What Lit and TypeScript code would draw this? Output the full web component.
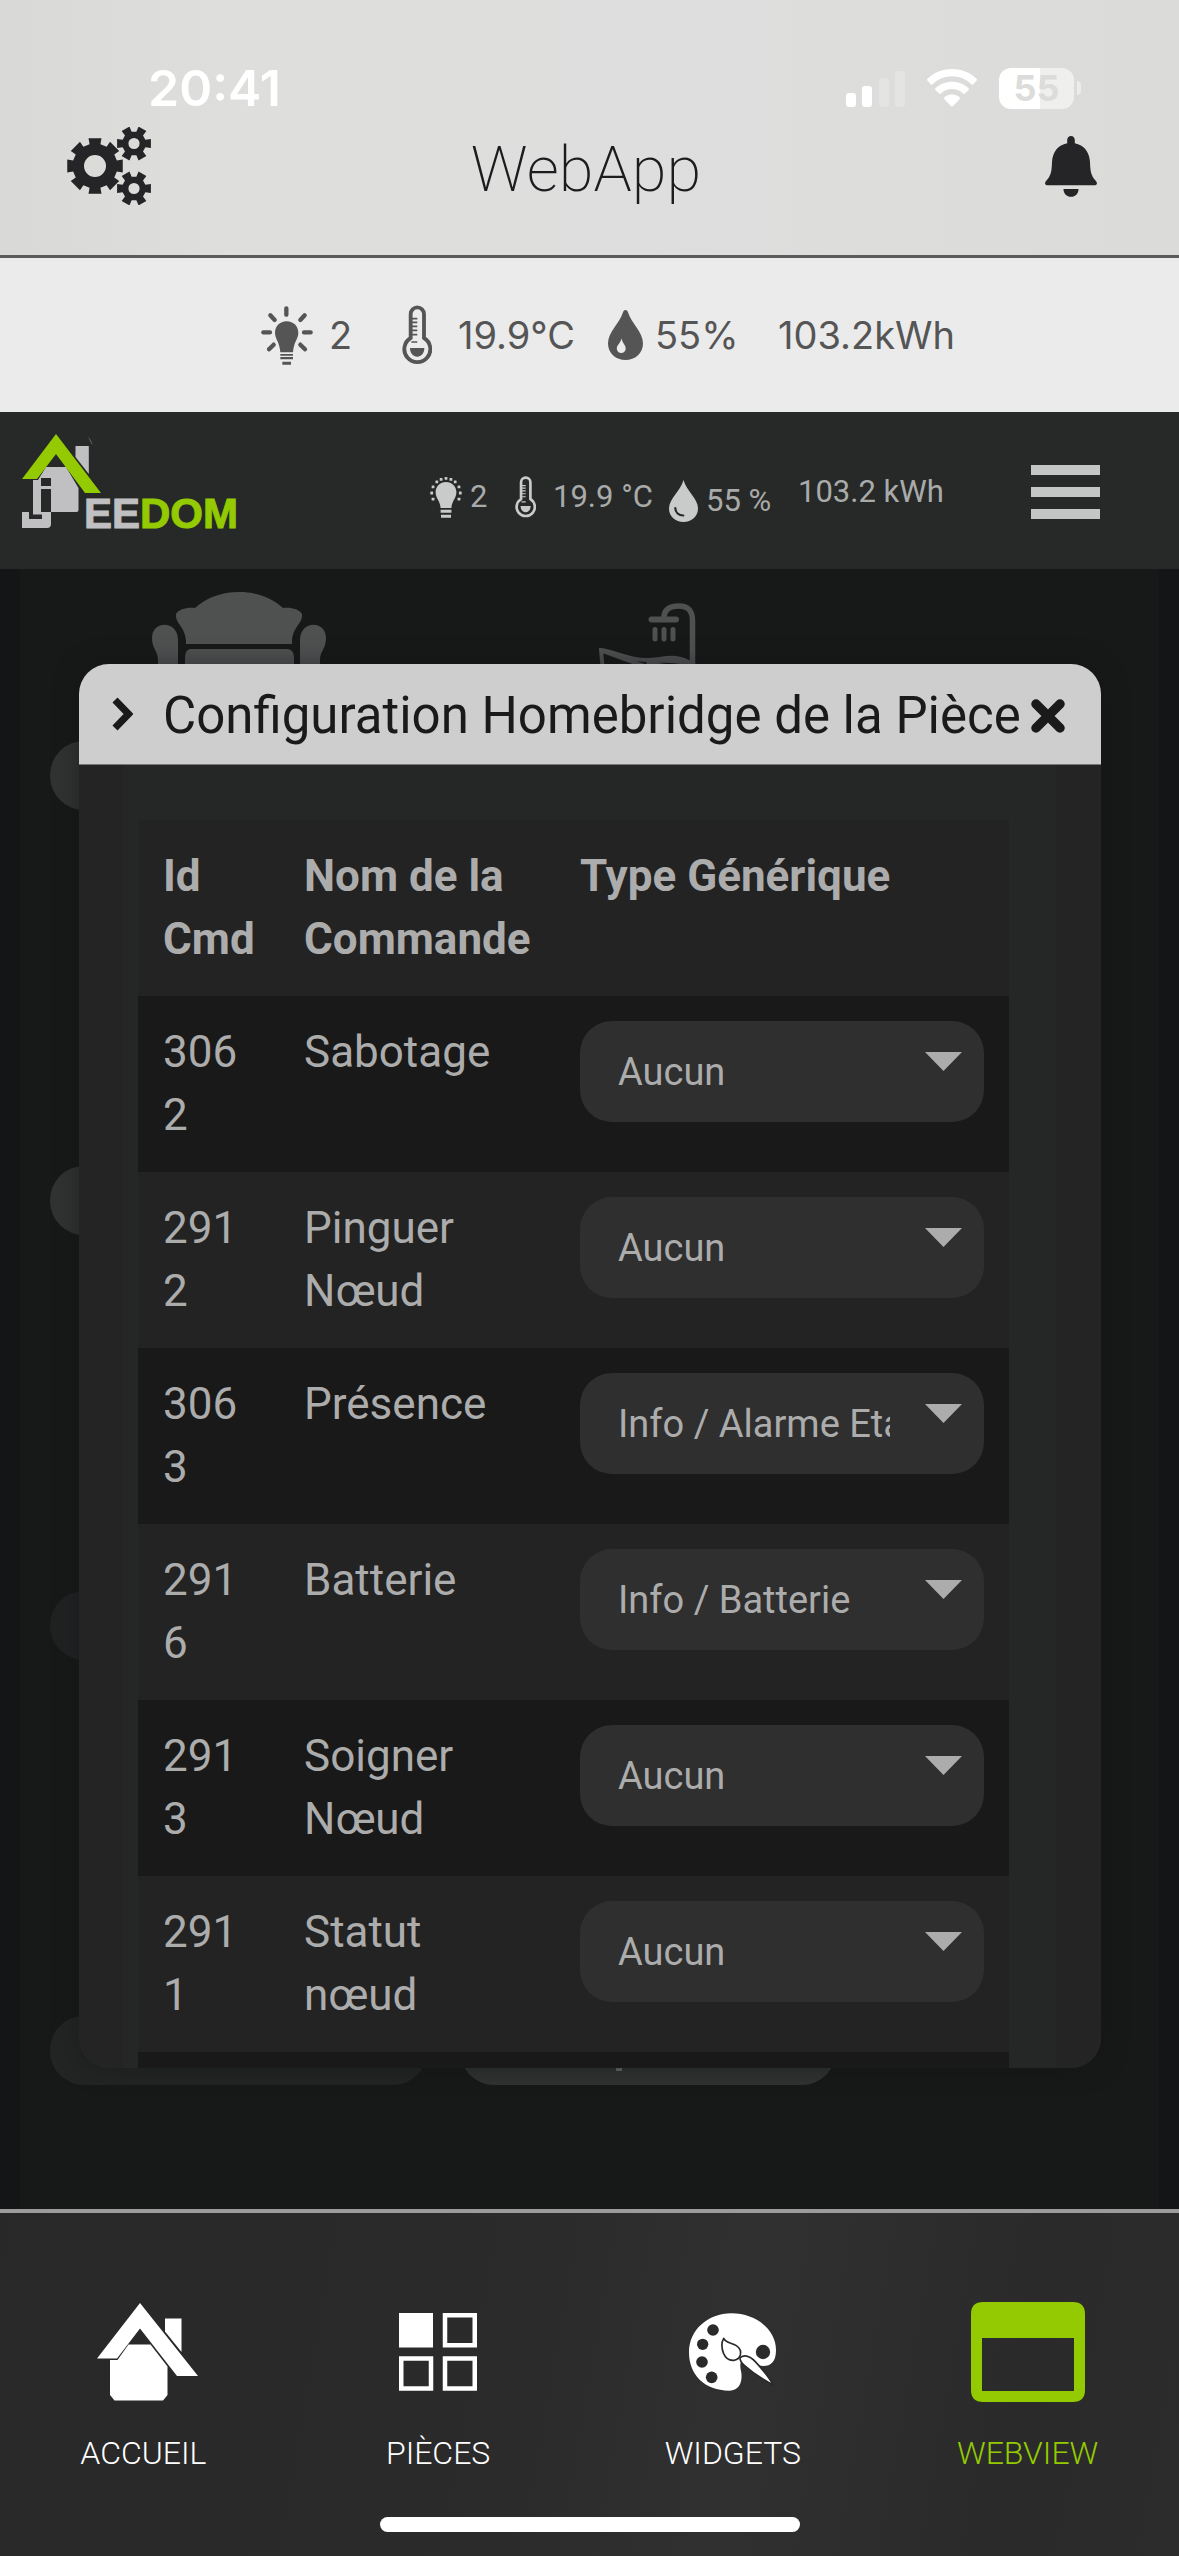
import { LitElement, html, css, svg } from "lit";
import { customElement, property } from "lit/decorators.js";

const round = (n: number) => Math.round(n * 100) / 100;

/** Outline of a gear with a round hole, teeth starting at angle 0. */
function gearPath(cx: number, cy: number, teeth: number, outer: number, root: number, hole: number, tip: number): string {
  const pitch = (Math.PI * 2) / teeth;
  const points: string[] = [];
  for (let i = 0; i < teeth; i++) {
    const a = i * pitch;
    const corners: [number, number][] = [
      [root, a - pitch * 0.31],
      [outer, a - tip],
      [outer, a + tip],
      [root, a + pitch * 0.31],
    ];
    for (const [r, t] of corners) points.push(`${round(cx + r * Math.cos(t))} ${round(cy + r * Math.sin(t))}`);
  }
  return `M${points.join("L")}Z M${cx - hole} ${cy}a${hole} ${hole} 0 1 0 ${hole * 2} 0a${hole} ${hole} 0 1 0 ${-hole * 2} 0z`;
}

const gearsIcon = html`<svg width="86" height="78" viewBox="0 0 86 78" fill="currentColor" fill-rule="evenodd" aria-hidden="true">
  <path d=${gearPath(28, 39, 8, 28.5, 22.5, 11, 0.23)} />
  <path d=${gearPath(67, 16.5, 6, 17.5, 12, 5.6, 0.26)} />
  <path d=${gearPath(67, 61.5, 6, 17.5, 12, 5.6, 0.26)} />
</svg>`;

const bellIcon = html`<svg width="52" height="61" viewBox="0 0 52 61" fill="currentColor" aria-hidden="true">
  <path d="M26 0c2.400 0 3.800 1.800 3.800 4v3.200C39 9 44.500 16 45 26c.3 10 1.200 13.500 5.500 18.500 2.500 3 1.500 4.700-1.500 4.700H3c-3 0-4-1.700-1.500-4.700C5.800 39.500 6.700 36 7 26 7.500 16 13 9 22.200 7.200V4c0-2.200 1.400-4 3.800-4z" />
  <path d="M18.500 53h15c0 4.800-3.200 7.800-7.500 7.800s-7.500-3-7.500-7.800z" />
</svg>`;

const signalIcon = html`<svg width="59" height="37" viewBox="0 0 59 37" fill="#fff" aria-hidden="true">
  <rect x="0" y="23" width="10" height="14" rx="3" /><rect x="16" y="16" width="10" height="21" rx="3" />
  <rect x="33" y="8" width="10" height="29" rx="3" opacity=".22" /><rect x="49" y="1" width="10" height="36" rx="3" opacity=".22" />
</svg>`;

const wifiIcon = html`<svg width="50" height="38" viewBox="0 0 50 38" fill="#fff" aria-hidden="true">
  <path d="M25 0C35 0 43.500 3.800 49.500 9.800c.6.600.6 1.400 0 2l-3.200 3.400c-.6.600-1.400.6-2 0C39.200 10.300 32.500 7.300 25 7.300S10.800 10.300 5.700 15.200c-.6.600-1.400.6-2 0L.5 11.800c-.6-.6-.6-1.400 0-2C6.500 3.800 15 0 25 0z" />
  <path d="M25 12.700c6.500 0 12.200 2.400 16.400 6.300.6.600.6 1.300 0 1.900l-3.400 3.500c-.6.600-1.300.6-1.900 0-2.900-2.700-6.700-4.300-11.100-4.300s-8.200 1.600-11.100 4.300c-.6.600-1.300.6-1.900 0l-3.400-3.500c-.6-.6-.6-1.300 0-1.900C12.800 15.100 18.500 12.700 25 12.700z" />
  <path d="M25 25.600c3 0 5.600 1 7.500 2.700.6.600.6 1.300 0 1.900l-6.500 6.900c-.6.600-1.400.6-2 0l-6.500-6.900c-.6-.6-.6-1.300 0-1.900 1.900-1.700 4.500-2.700 7.500-2.700z" />
</svg>`;

const shiningBulb = html`<svg width="52" height="59" viewBox="0 0 156 177" fill="currentColor" aria-hidden="true">
  <path d="M77 46c21 0 35 15 35 35 0 18-14 26-16 58H58c-2-32-16-40-16-58 0-20 14-35 35-35z" />
  <path d="M58 144h38v5H58zM58 153h38v7H58zM64 167h26v9H64z" />
  <path d="M76 7v19M7 79h20M129 79h20M28 28l13 14M131 28l-13 14M38 116l-14 14M118 116l14 14" fill="none" stroke="currentColor" stroke-width="13" stroke-linecap="round" />
</svg>`;

const dottedBulb = html`<svg width="32" height="42" viewBox="0 0 32 42" fill="currentColor" aria-hidden="true">
  <path d="M16 6c6 0 10.400 4.500 10.400 10.300 0 6-4.400 8.200-5 15.700H10.600c-.6-7.500-5-9.700-5-15.700C5.600 10.500 10 6 16 6zM10.600 33.800h10.800v3H10.600zM11 38.800h10v3H11z" />
  ${[-205, -180, -155, -130, -110, -90, -70, -50, -25, 0, 25].map((deg) => {
    const a = (deg * Math.PI) / 180;
    return svg`<rect x=${round(14.600 + 14.300 * Math.cos(a))} y=${round(15.600 + 14.600 * Math.sin(a))} width="2.800" height="2.800" rx=".5" />`;
  })}
</svg>`;

const thermometer = (width: number, height: number) => html`<svg width=${width} height=${height} viewBox="0 0 90 178" fill="currentColor" aria-hidden="true">
  <path d="M26 98V26a20 20 0 0 1 40 0v72a39 39 0 1 1-40 0z" fill="none" stroke="currentColor" stroke-width="11.500" />
  <path d="M28 40h18M28 51h18M28 63h18M28 75h18M28 88h18M28 110h18" stroke="currentColor" stroke-width="5" />
  <path d="M24 128h43c0 16-9 26-21.500 26S24 144 24 128z" />
</svg>`;

const dropHole = html`<svg width="35" height="50" viewBox="0 0 35 50" fill="currentColor" fill-rule="evenodd" aria-hidden="true">
  <path d="M17.500 0c1.200 0 2 .7 2.400 2C23.500 13.500 35 22 35 33.500 35 43.500 27 50 17.500 50S0 43.500 0 33.500C0 22 11.500 13.500 15.100 2c.4-1.300 1.200-2 2.400-2zM13.500 28.500c-.9 4.500-4.700 6.500-4.700 10a4.200 4.200 0 0 0 8.900 0c0-3.500-3.300-5.500-4.200-10z" />
</svg>`;

const dropArc = html`<svg width="29" height="42" viewBox="0 0 29 42" aria-hidden="true">
  <path d="M14.500 0C17.500 11 29 18.500 29 28.500 29 36.500 22.500 42 14.500 42S0 36.500 0 28.500C0 18.500 11.500 11 14.500 0z" fill="currentColor" />
  <path d="M6.300 28c0 4.500 3.500 7.500 8 7.500" fill="none" stroke="#272928" stroke-width="2.200" stroke-linecap="round" />
</svg>`;

const logoHouse = html`<svg width="80" height="96" viewBox="0 0 80 96" aria-hidden="true">
  <path d="M53.500 12h13.300v28L53.500 23z" fill="#c0c0c3" />
  <path d="M66 3c2.500 2 4 4.500 4.500 8-1.500-1.500-2-3-3-5z" fill="#5a5c5d" />
  <path d="M24 33h20l12.500 21v22q0 2-2 2H29v2.500H11V46h5z" fill="#c0c0c3" />
  <path d="M0 78h7v7h13v-7h9v12q0 4-4 4H0z" fill="#c0c0c3" />
  <path d="M19 44h10v8H19zM19 55h10v23H19z" fill="#272928" />
  <path d="M34 0l45 59H63L34 20 15 45H0z" fill="#94ca02" />
</svg>`;

const armchair = html`<svg width="174" height="120" viewBox="0 0 174 120" fill="currentColor" aria-hidden="true">
  <path d="M87 0c18 0 33 6 44 16 8-1 16 1 19 6 1 10-9 12-10 27v3H34v-3c-1-15-11-17-10-27 3-5 11-7 19-6C54 6 69 0 87 0z" />
  <path d="M38 57h98q6 1 6 9v14H33V66q0-8 5-9z" />
  <path d="M0 46c0-18 26-18 26 2v72H6V68c0-9-6-11-6-22zM174 46c0-18-26-18-26 2v72h20V68c0-9 6-11 6-22z" />
</svg>`;

const bathtub = html`<svg width="98" height="109" viewBox="0 0 98 109" fill="none" stroke="currentColor" aria-hidden="true">
  <path d="M65 15C65 6 71 3 80 3c9 0 13.500 5 13.500 14v62" stroke-width="5.500" />
  <path d="M52.500 16.500H77" stroke-width="6" stroke-linecap="round" />
  <path d="M56 26.500v9.500M65 26.500v9.500M74 26.500v9.500" stroke-width="5" stroke-linecap="round" />
  <path d="M5 79L2 47c14 2 28 10 45 10 16 0 30-7 46 4M4 48l52 19M48 59c16-2 30-2 44 3-12 3-30 2-44-3z" stroke-width="4" />
</svg>`;

/* The box starts left of the roof: the chimney side sits off centre. */
const houseTab = html`<svg width="109" height="98" viewBox="-8 0 109 98" fill="currentColor" aria-hidden="true">
  <path d="M43 0l58 73H80L43 25.500 20 55.500H0z" />
  <path d="M68 15.500h16.500v33.500L68 28.500z" />
  <path d="M31.500 41.500h22L70.500 63.500V92l-4.500 5.500H17.500L13 92V57h7.500z" />
</svg>`;

const roomsTab = html`<svg width="78" height="78" viewBox="0 0 78 78" fill="none" stroke="currentColor" stroke-width="4.500" aria-hidden="true">
  <rect x="0" y="0" width="34" height="34.500" fill="currentColor" stroke="none" />
  <rect x="46" y="2.250" width="29.750" height="30" /><rect x="2.250" y="45.500" width="29.750" height="30" /><rect x="46" y="45.500" width="29.750" height="30" />
</svg>`;

const paletteTab = html`<svg width="87" height="79" viewBox="33 35 261 235" aria-hidden="true">
  <path d="M160 35c75 0 134 50 134 110 0 35-15 48-38 48-22 0-38-24-60-18-12 4-10 20-6 38 3 22-2 54-36 54C80 267 33 220 33 152 33 85 90 35 160 35z" fill="currentColor" />
  <g fill="#2a2a2a"><circle cx="105" cy="85" r="17.500" /><circle cx="74" cy="128" r="17" /><circle cx="72" cy="181" r="17.500" /><circle cx="101" cy="227" r="17.500" /><circle cx="255" cy="151" r="21.500" /></g>
  <g fill="currentColor" stroke="#2a2a2a" stroke-width="5" stroke-linejoin="round">
    <path d="M186 168c14-10 32-3 48 14 20 22 40 46 52 68-30-16-66-40-88-60-8-7-12-14-12-22z" />
    <path d="M137 110c8 16 24 12 38 22 10 7 15 18 12 28-3 9-10 15-20 16-12 1-24-6-30-20-6-15-8-32 0-46z" />
  </g>
</svg>`;

const webviewTab = html`<svg width="114" height="100" viewBox="0 0 114 100" fill="currentColor" fill-rule="evenodd" aria-hidden="true">
  <path d="M12 0h90q12 0 12 12v76q0 12-12 12H12Q0 100 0 88V12Q0 0 12 0zM11 36v53h92V36z" />
</svg>`;

@customElement("app-header")
class AppHeader extends LitElement {
  static styles = css`
    :host { display: block; background: linear-gradient(90deg, #d9d9d7, #dededc 20%, #dedede 55%, #dbdbd9); border-bottom: 3px solid #5c5a5a; padding: 60px 0 39px; }
    .status { display: flex; align-items: center; height: 56px; padding: 0 98px 0 148px; font-family: Inter, "Liberation Sans", sans-serif; }
    .time { color: #fff; font-size: 50px; font-weight: 600; line-height: 56px; }
    .signals { display: flex; align-items: center; gap: 22px; margin-left: auto; }
    .battery { display: flex; align-items: center; gap: 3px; }
    .level { width: 75px; height: 41px; border-radius: 12px; background: linear-gradient(90deg, #fff 55%, #efefee 55%); color: #dcdcda; font-size: 36px; font-weight: 700; line-height: 41px; text-align: center; }
    .nub { width: 4px; height: 14px; border-radius: 0 4px 4px 0; background: #ececeb; }
    .bar { display: grid; grid-template-columns: 1fr auto 1fr; align-items: center; height: 100px; padding: 0 82px 0 67px; color: #252527; }
    h1 { margin: 0; padding: 8px 0 0 8px; font: 200 63px/92px Roboto, "Liberation Sans", sans-serif; color: #1c1c1e; }
    button { display: flex; padding: 0; border: 0; background: none; color: inherit; }
    .right { justify-self: end; }
  `;
  render() {
    return html`<div class="status">
        <span class="time">20:41</span>
        <div class="signals">${signalIcon}${wifiIcon}<div class="battery"><div class="level">55</div><div class="nub"></div></div></div>
      </div>
      <header class="bar">
        <button aria-label="Réglages">${gearsIcon}</button>
        <h1>WebApp</h1>
        <button class="right" aria-label="Notifications">${bellIcon}</button>
      </header>`;
  }
}

@customElement("summary-bar")
class SummaryBar extends LitElement {
  static styles = css`
    :host { display: grid; grid-template-columns: 141px 206px 170px auto; align-items: center; height: 154px; padding-left: 261px; background: #ebebeb; color: #555; font: 400 38px/44px Inter, "Liberation Sans", sans-serif; }
    .item { display: flex; align-items: center; gap: 16px; }
    .wide { gap: 26px; }
    .tight { gap: 12px; }
  `;
  render() {
    return html`<span class="item">${shiningBulb}2</span>
      <span class="item wide">${thermometer(30, 60)}19.9°C</span>
      <span class="item tight">${dropHole}55%</span>
      <span class="item">103.2kWh</span>`;
  }
}

@customElement("jeedom-header")
class JeedomHeader extends LitElement {
  static styles = css`
    :host { display: flex; align-items: flex-start; height: 157px; padding: 22px 79px 0 22px; box-sizing: border-box; background: #272928; color: #c4c6c5; }
    .logo { display: flex; align-items: flex-end; width: 408px; height: 96px; text-decoration: none; }
    .name { margin-left: -18px; font: 700 42px/32px "Liberation Sans", Arial, sans-serif; color: #c0c0c3; -webkit-text-stroke: 1px currentColor; }
    .green { color: #94ca02; }
    .stats { display: grid; grid-template-columns: 85px 154px 129px auto; align-items: start; padding-top: 38px; font: 400 31px/40px Roboto, "Liberation Sans", sans-serif; color: #a9abaa; }
    .item { display: flex; align-items: center; gap: 8px; }
    .item svg { color: #c9cbca; }
    .wide { gap: 17px; }
    .mid { padding-top: 4px; }
    .low { padding-top: 8px; }
    .menu { display: flex; flex-direction: column; gap: 12px; width: 69px; margin: 31px 0 0 auto; padding: 0; border: 0; background: none; }
    .line { height: 10px; background: #c4c6c5; }
  `;
  render() {
    return html`<a class="logo" href="#">${logoHouse}<span class="name">EE<span class="green">DOM</span></span></a>
      <div class="stats">
        <span class="item mid">${dottedBulb}2</span>
        <span class="item mid wide">${thermometer(21, 42)}19.9 °C</span>
        <span class="item low">${dropArc}55 %</span>
        <span class="item">103.2 kWh</span>
      </div>
      <button class="menu" aria-label="Menu"><span class="line"></span><span class="line"></span><span class="line"></span></button>`;
  }
}

interface Tile { icon?: unknown; tone: string; }

const TILES: Tile[] = [
  { icon: armchair, tone: "light" }, { icon: bathtub, tone: "light" },
  { tone: "light" }, { tone: "light" },
  { tone: "dim" }, { tone: "dim" },
  { tone: "soft" }, { tone: "light tail" },
];

@customElement("room-grid")
class RoomGrid extends LitElement {
  static styles = css`
    :host { display: grid; grid-template-columns: 377px 376px; grid-template-rows: 241px; grid-auto-rows: 425px; column-gap: 33px; padding-left: 50px; color: #4f5151; }
    .tile { display: flex; flex-direction: column; align-items: center; justify-content: flex-end; }
    .tile svg { margin-bottom: -11px; }
    .tile svg + .pill { margin-top: 40px; }
    .pill { position: relative; width: 100%; height: 69px; border-radius: 34px; background: #313332; }
    .dim .pill { background: #202222; }
    .soft .pill { background: #232524; }
    .tail .pill::after { content: ""; position: absolute; left: 156px; bottom: 14px; width: 6px; height: 10px; background: #686a69; }
  `;
  render() {
    return TILES.map((t) => html`<div class="tile ${t.tone}">${t.icon ?? ""}<div class="pill"></div></div>`);
  }
}

interface Command { id: string; name: string; type: string; }

const COMMANDS: Command[] = [
  { id: "3062", name: "Sabotage", type: "Aucun" },
  { id: "2912", name: "Pinguer Nœud", type: "Aucun" },
  { id: "3063", name: "Présence", type: "Info / Alarme Etat" },
  { id: "2916", name: "Batterie", type: "Info / Batterie" },
  { id: "2913", name: "Soigner Nœud", type: "Aucun" },
  { id: "2911", name: "Statut nœud", type: "Aucun" },
];

@customElement("config-dialog")
class ConfigDialog extends LitElement {
  @property({ attribute: false }) commands: Command[] = [];

  static styles = css`
    :host { display: flex; flex-direction: column; min-height: 0; border-radius: 30px; overflow: hidden; background: #242424; box-shadow: 0 0 24px rgba(18, 19, 24, 0.5); font-family: Roboto, "Liberation Sans", sans-serif; }
    .title { display: flex; align-items: center; flex: none; height: 100px; padding: 0 35px 0 33px; background: #cecece; border-bottom: 1px solid #777; color: #1a1a1a; }
    h2 { margin: 0 auto 0 30px; padding-top: 4px; font-size: 51px; font-weight: 400; line-height: 60px; white-space: nowrap; }
    .close { display: flex; padding: 4px 0 0; border: 0; background: none; color: inherit; }
    .body { flex: 1; min-height: 0; overflow: hidden; padding: 55px 92px 0 59px; background: linear-gradient(90deg, #242424 44px, #252726 44px, #252726 calc(100% - 45px), #242424 calc(100% - 45px)); }
    table { width: 100%; table-layout: fixed; border-collapse: collapse; color: #acacac; font-size: 44px; line-height: 63px; }
    .c-id { width: 141px; }
    .c-name { width: 276px; }
    tr { background: #232323; }
    tbody tr:nth-child(odd) { background: #191919; }
    th, td { box-sizing: border-box; height: 176px; padding: 25px; text-align: left; vertical-align: top; overflow-wrap: anywhere; }
    th { padding-right: 8px; font-weight: 700; }
    .pick { display: block; position: relative; }
    select { display: block; width: 100%; height: 101px; padding: 0 94px 0 38px; border: 0; border-radius: 32px; appearance: none; background: #2f2f2f; color: #acacac; font: 400 38px/44px Roboto, "Liberation Sans", sans-serif; }
    .arrow { position: absolute; right: 22px; top: 31px; pointer-events: none; }
  `;
  render() {
    return html`<header class="title">
        <svg width="21" height="34" viewBox="0 0 21 34" fill="none" stroke="currentColor" stroke-width="7" aria-hidden="true"><path d="M3 3l13.500 14L3 31" /></svg>
        <h2 id="title">Configuration Homebridge de la Pièce</h2>
        <button class="close" aria-label="Fermer"><svg width="36" height="36" viewBox="0 0 36 36" stroke="currentColor" stroke-width="9.500" stroke-linecap="round" aria-hidden="true"><path d="M6 6l24 24M30 6L6 30" /></svg></button>
      </header>
      <div class="body">
        <table aria-labelledby="title">
          <colgroup><col class="c-id" /><col class="c-name" /><col /></colgroup>
          <thead><tr><th scope="col">Id Cmd</th><th scope="col">Nom de la Commande</th><th scope="col">Type Générique</th></tr></thead>
          <tbody>
            ${this.commands.map((c) => html`<tr>
              <td>${c.id}</td><td>${c.name}</td>
              <td><label class="pick"><select aria-label=${"Type Générique " + c.name}><option>${c.type}</option></select>
                <svg class="arrow" width="37" height="20" viewBox="0 0 37 20" fill="#acacac" aria-hidden="true"><path d="M0 0h37L18.500 19z" /></svg></label></td>
            </tr>`)}
            <tr><td colspan="3"></td></tr>
          </tbody>
        </table>
      </div>`;
  }
}

@customElement("tab-bar")
class TabBar extends LitElement {
  static styles = css`
    :host { display: block; padding-bottom: 24px; border-top: 4px solid #9c9c9c; background: linear-gradient(100deg, #282829, #2b2b2b 45%, #303030 62%, #2a2a2b 85%, #2c2c2c); }
    nav { display: grid; grid-template-columns: repeat(4, 1fr); margin: 0 4px 0 -4px; padding-top: 89px; }
    a { display: flex; flex-direction: column; align-items: center; gap: 32px; color: #fff; text-decoration: none; font: 300 32px/38px Roboto, "Liberation Sans", sans-serif; }
    .icon { display: flex; align-items: center; height: 100px; }
    .active { color: #94ca02; }
    .home { width: 420px; height: 15px; margin: 45px auto 0; border-radius: 8px; background: #fff; }
  `;
  render() {
    const tabs = [["ACCUEIL", houseTab], ["PIÈCES", roomsTab], ["WIDGETS", paletteTab], ["WEBVIEW", webviewTab]] as const;
    return html`<nav>${tabs.map(([label, icon], i) => html`<a href="#" class=${i === 3 ? "active" : ""}><span class="icon">${icon}</span>${label}</a>`)}</nav>
      <div class="home"></div>`;
  }
}

@customElement("app-root")
class AppRoot extends LitElement {
  static styles = css`
    :host { display: flex; flex-direction: column; height: 100vh; }
    app-header, summary-bar, jeedom-header, tab-bar { flex: none; }
    .stage { display: grid; grid-template: minmax(0, 1fr) / minmax(0, 1fr); flex: 1; min-height: 0; overflow: hidden; background: linear-gradient(90deg, #131517 20px, #171918 20px, #171918 calc(100% - 20px), #131517 calc(100% - 20px)); }
    room-grid, config-dialog { grid-area: 1 / 1; }
    room-grid { align-self: start; }
    config-dialog { margin: 95px 78px 141px 79px; z-index: 1; }
  `;
  render() {
    return html`<app-header></app-header>
      <summary-bar></summary-bar>
      <jeedom-header></jeedom-header>
      <main class="stage"><room-grid></room-grid><config-dialog .commands=${COMMANDS}></config-dialog></main>
      <tab-bar></tab-bar>`;
  }
}
